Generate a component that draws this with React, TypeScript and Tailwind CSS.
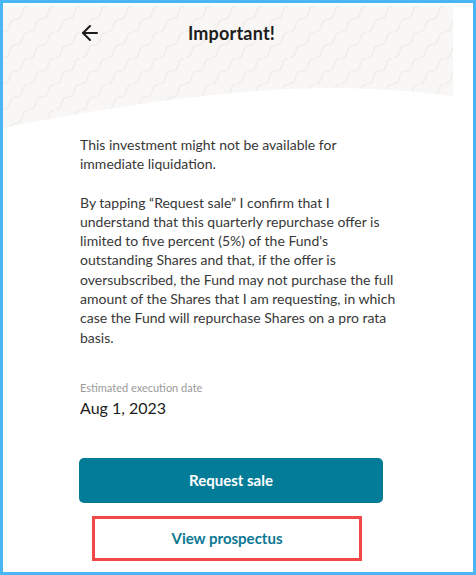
import { ArrowLeft } from "lucide-react";

// wavy backdrop behind the header, cut off by a soft curve at the bottom
const HeaderBackdrop = () => {
  return (
    <svg
      className="absolute left-0 top-0"
      width="450"
      height="130"
      viewBox="0 0 450 130"
    >
      <defs>
        <pattern id="waves" width="26" height="26" patternUnits="userSpaceOnUse">
          <path
            d="M0 26 C 9 26, 4 13, 13 13 S 17 0, 26 0"
            fill="none"
            stroke="#efeeeb"
            strokeWidth="1.6"
          />
        </pattern>
        <clipPath id="headerShape">
          <path d="M0 0 H450 V91 Q 410 83 330 82 Q 200 82 0 122 Z" />
        </clipPath>
      </defs>
      <g clipPath="url(#headerShape)">
        <rect width="450" height="130" fill="#f8f7f5" />
        <rect width="450" height="130" fill="url(#waves)" />
      </g>
    </svg>
  );
};

const App = () => {
  return (
    <div className="w-[476px] h-[575px] border-[3px] border-[#4ab5f3] bg-white overflow-hidden font-['Lato',sans-serif]">
      <div className="relative w-[450px] h-full pt-[3px]">
        <div className="relative h-full">
          <HeaderBackdrop />

          <div className="relative">
            {/* top bar */}
            <div className="flex items-center h-[54px] pl-[76px] pr-[70px]">
              <ArrowLeft size={24} strokeWidth={2} className="text-[#1d1d1d] -ml-[1px]" />
              <div className="flex-1 text-center text-[18px] font-bold text-[#1d1d1d] pr-[22px] tracking-[0.2px]">
                Important!
              </div>
            </div>

            {/* body copy */}
            <div className="ml-[77px] w-[316px] mt-[75px] text-[14px] leading-[19.3px] text-[#383838]">
              <p>
                This investment might not be available for immediate liquidation.
              </p>
              <p className="mt-[19px]">
                By tapping “Request sale” I confirm that I understand that this
                quarterly repurchase offer is limited to five percent (5%) of the
                Fund's outstanding Shares and that, if the offer is
                oversubscribed, the Fund may not purchase the full amount of the
                Shares that I am requesting, in which case the Fund will
                repurchase Shares on a pro rata basis.
              </p>

              <div className="mt-[31px] text-[11px] text-[#9a9a9a]">
                Estimated execution date
              </div>
              <div className="mt-[1px] text-[16px] text-[#1d1d1d]">Aug 1, 2023</div>
            </div>

            {/* actions */}
            <button className="block ml-[76px] mt-[40px] w-[304px] h-[45px] rounded-[5px] bg-[#037c98] text-white text-[15px] font-bold">
              Request sale
            </button>
            <button className="flex items-center justify-center ml-[89px] mt-[13px] w-[270px] h-[45px] border-[3px] border-[#f44848] text-[#0b7893] text-[15px] font-bold">
              View prospectus
            </button>
          </div>
        </div>
      </div>
    </div>
  );
};

export default App;
